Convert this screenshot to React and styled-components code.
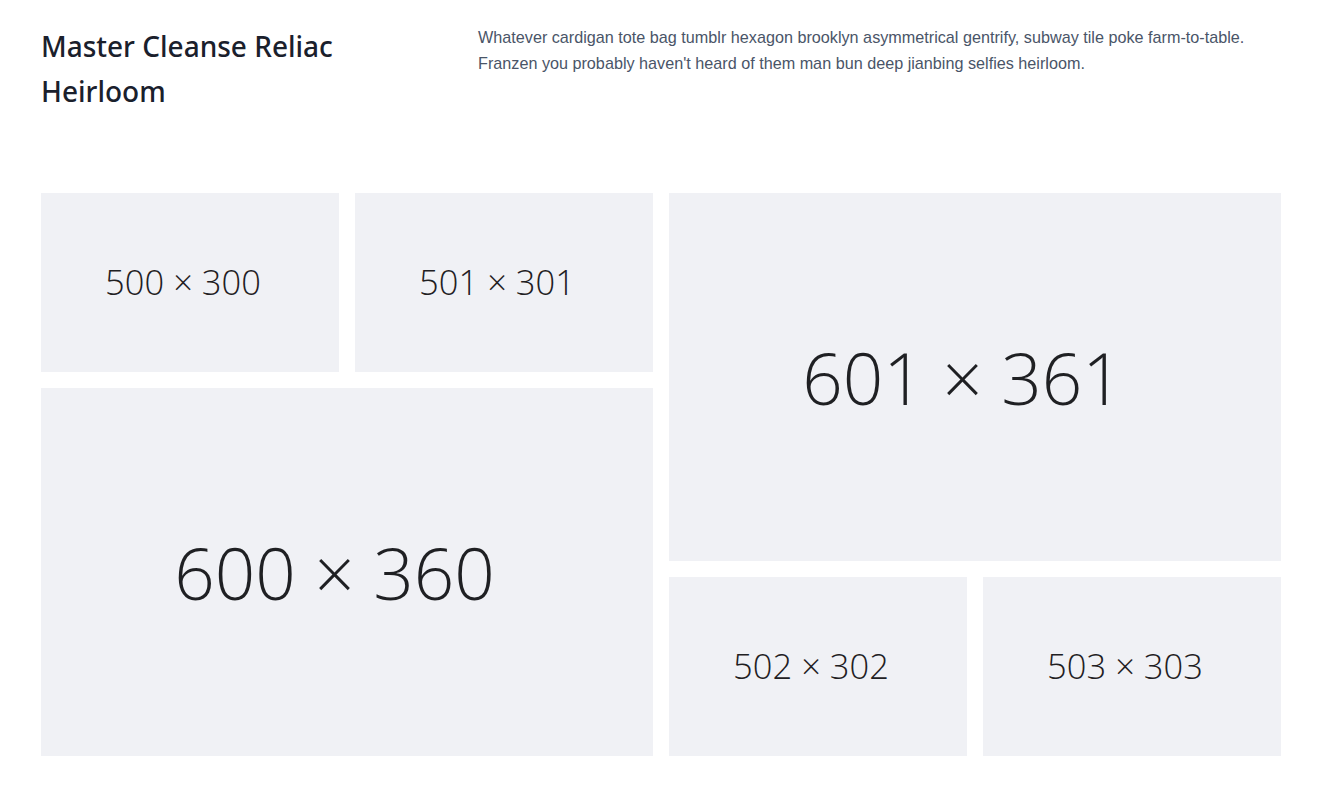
import React from 'react';
import styled, { createGlobalStyle } from 'styled-components'

const GlobalStyle = createGlobalStyle`
  html, body {
    margin: 0;
    padding: 0;
    background: #ffffff;
  }
  body {
    font-family: "Noto Sans", "Open Sans", sans-serif;
    line-height: 1.5;
  }
`

const Section = styled.section`
  padding: 24px 48px 31px 41px;
`

const Container = styled.div`
  width: 1240px;
`

const Header = styled.div`
  display: flex;
  width: 100%;
  margin-bottom: 79px;
`

const Title = styled.h1`
  width: 413px;
  margin: 0;
  font-family: "Noto Sans", sans-serif;
  font-size: 28px;
  font-weight: 500;
  line-height: 45px;
  color: #1a202c;
`

const Intro = styled.p`
  flex: 1;
  margin: 0;
  padding-left: 24px;
  font-family: "Liberation Sans", sans-serif;
  font-size: 16.2px;
  line-height: 26px;
  color: #4a5568;
`

const Gallery = styled.div`
  display: flex;
  gap: 16px;
`

const Half = styled.div`
  display: flex;
  flex-direction: column;
  gap: 16px;
  width: 612px;
`

const Row = styled.div`
  display: flex;
  gap: 16px;
`

// the dummy images draw their label a little left of centre
const Placeholder = styled.div`
  display: flex;
  align-items: center;
  justify-content: center;
  box-sizing: border-box;
  flex: ${(props) => (props.small ? '1' : 'none')};
  width: ${(props) => (props.small ? 'auto' : '612px')};
  height: ${(props) => (props.small ? '179px' : '368px')};
  padding-right: ${(props) => (props.small ? '14px' : '25px')};
  background: #f0f1f5;
  color: #1f2023;
  font-family: "Open Sans", sans-serif;
  font-weight: 300;
  font-size: ${(props) => (props.small ? '34.5px' : '71px')};
  line-height: 1;
  white-space: nowrap;
`

const Image = ({ w, h, small }) => (
  <Placeholder small={small}>{w} × {h}</Placeholder>
)

const App = () => {
  return (
    <>
      <GlobalStyle />
      <Section>
        <Container>
          <Header>
            <Title>Master Cleanse Reliac Heirloom</Title>
            <Intro>
              Whatever cardigan tote bag tumblr hexagon brooklyn asymmetrical gentrify, subway tile poke farm-to-table.
              Franzen you probably haven't heard of them man bun deep jianbing selfies heirloom.
            </Intro>
          </Header>
          <Gallery>
            <Half>
              <Row>
                <Image small w={500} h={300} />
                <Image small w={501} h={301} />
              </Row>
              <Image w={600} h={360} />
            </Half>
            <Half>
              <Image w={601} h={361} />
              <Row>
                <Image small w={502} h={302} />
                <Image small w={503} h={303} />
              </Row>
            </Half>
          </Gallery>
        </Container>
      </Section>
    </>
  )
}

export default App;
